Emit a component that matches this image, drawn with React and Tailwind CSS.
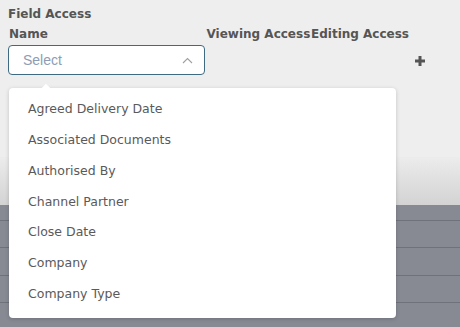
import React from 'react';

const fields = [
  'Agreed Delivery Date',
  'Associated Documents',
  'Authorised By',
  'Channel Partner',
  'Close Date',
  'Company',
  'Company Type',
];

const App = () => {
  return (
    <div className="relative w-[460px] h-[327px] overflow-hidden bg-[#878a93] font-['DejaVu_Sans',sans-serif]">
      {/* top panel */}
      <div className="h-[157px] bg-[#eeeeee] px-[8px] pt-[7px]">
        <div className="text-[12px] leading-[15px] font-bold text-[#555555]">Field Access</div>
        <div className="mt-[5px] flex items-start text-[12px] leading-[15px] font-bold text-[#555555]">
          <div className="w-[198.5px] pl-[1px]">Name</div>
          <div className="w-[104.5px] whitespace-nowrap">Viewing Access</div>
          <div className="whitespace-nowrap">Editing Access</div>
        </div>
        <div className="mt-[3px] flex items-center">
          <div className="w-[197px] h-[30px] flex items-center justify-between rounded-[4px] border border-[#3e6a82] bg-white pl-[14px] pr-[11px]">
            <span className="text-[14px] text-[#8d9db5] font-['Liberation_Sans',sans-serif]">Select</span>
            <svg width="11" height="7" viewBox="0 0 11 7" fill="none">
              <path d="M1 6 L5.5 1.5 L10 6" stroke="#a0a0a0" strokeWidth="1.1" />
            </svg>
          </div>
          <svg className="ml-[210px] mt-[2px]" width="10" height="10" viewBox="0 0 10 10">
            <rect x="3.5" y="0" width="3" height="10" fill="#555555" />
            <rect x="0" y="3.5" width="10" height="3" fill="#555555" />
          </svg>
        </div>
      </div>
      {/* gradient strip */}
      <div className="h-[48px] bg-gradient-to-b from-[#ececec] to-[#d3d3d3]" />
      {/* grey rows */}
      <div className="flex flex-col">
        <div className="h-[16px] border-b border-[#6f727a]" />
        <div className="h-[27px] border-b border-[#6f727a]" />
        <div className="h-[28px] border-b border-[#6f727a]" />
        <div className="h-[27px] border-b border-[#6f727a]" />
        <div className="h-[24px]" />
      </div>

      {/* dropdown menu */}
      <div className="absolute left-[9px] top-[88px] w-[387px] rounded-[4px] bg-white pt-[6px] pb-[8px] shadow-[0_1px_4px_rgba(0,0,0,0.18)]">
        <div className="absolute left-[34px] -top-[3px] w-[6px] h-[6px] rotate-45 bg-white" />
        {fields.map(f => (
          <div key={f} className="h-[30.85px] flex items-center pl-[19px] text-[12.5px] text-[#5a5a5a]">
            {f}
          </div>
        ))}
      </div>
    </div>
  );
};

export default App;
